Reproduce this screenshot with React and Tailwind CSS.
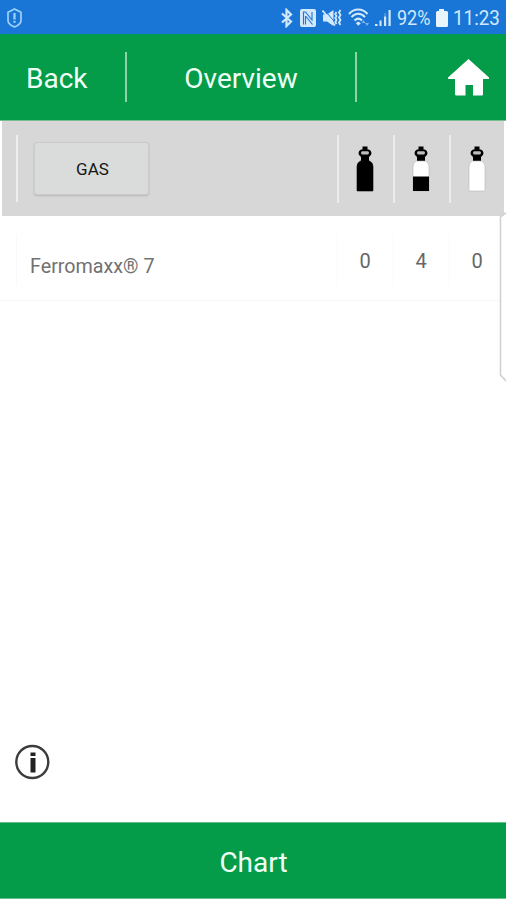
const rows = [{ name: 'Ferromaxx® 7', counts: [0, 4, 0] }];

const levels = ['full', 'half', 'empty'];

const StatusBar = () => (
  <div className="flex h-[34px] w-full items-center bg-[#1976d6] pl-[7px] pt-[1px] text-[20px] leading-none text-[#d3e8fb]">
    <svg className="h-5 w-4 shrink-0" viewBox="0 0 16 20" fill="none" stroke="#9fd2fa" strokeWidth="1.7">
      <path d="M7.500 1 14 4.300v8.200c0 2.800-3 5-6.500 6.500C4 17.500 1 15.300 1 12.500V4.300Z" strokeLinejoin="round" />
      <path d="M7.500 5v6.500M7.500 12.800v2" strokeWidth="2.200" />
    </svg>
    <svg className="ml-[258px] h-5 w-3 shrink-0" viewBox="0 0 12 20" fill="none" stroke="currentColor" strokeWidth="2.200">
      <path d="m1 5.500 9 8-4.500 4.500V2L10 6.500l-9 8" />
    </svg>
    <svg className="ml-[7px] h-5 w-4 shrink-0" viewBox="0 0 16 20">
      <path d="M2 1h12a2 2 0 0 1 2 2v14a2 2 0 0 1-2 2H2a2 2 0 0 1-2-2V3a2 2 0 0 1 2-2Z" fill="currentColor" />
      <path d="M3.500 16.500V4h2l6.500 8V4M5.500 8v8.500M6 8.500l6.500 8" fill="none" stroke="#1976d6" strokeWidth="1.100" />
    </svg>
    <svg className="ml-[6px] h-5 w-5 shrink-0" viewBox="0 0 20 20" fill="none" stroke="currentColor">
      <path d="M1 6.500h4L11.500 2v16L5 13.500H1Z" fill="currentColor" stroke="none" />
      <path d="m2.500 2 12 14" stroke="#1976d6" strokeWidth="1" />
      <path d="m.500 2.500 12.500 15" strokeWidth="1.800" />
      <path d="m14.500 4-1.200 2 1.200 2-1.200 2 1.200 2-1.200 2 1.200 2M18.500 2 17 4.500 18.500 7 17 9.500l1.500 2.500-1.500 2.500 1.500 2.500" strokeWidth="1.800" />
    </svg>
    <svg className="ml-[6px] h-5 w-[22px] shrink-0" viewBox="0 0 22 20" fill="none" stroke="currentColor" strokeWidth="2">
      <path d="M1 6C6 0 14.500 0 19.500 6M3.500 9.200c4-4.500 9.500-4.500 13.500 0M6.500 12.500c2.500-2.500 5-2.500 7.500 0" />
      <path d="m7.800 15.200 2.500-1.700 2.500 1.700-2.500 2.500Z" fill="currentColor" stroke="none" />
      <path d="m13.500 15 2-3 2 3ZM17 15l2 3 2-3Z" fill="#7db3e9" stroke="none" />
    </svg>
    <svg className="ml-[5px] h-5 w-[17px] shrink-0" viewBox="0 0 17 20" fill="currentColor">
      <path d="M0 16h2.500v2H0ZM4.500 12.500h2V18h-2ZM9 8.500h2.200V18H9ZM13.500 2h2.200v16h-2.200Z" />
      <path d="M9 5h2.200v3.500H9Z" opacity=".25" />
    </svg>
    <span className="ml-[5px] w-[38px] shrink-0">
      <span className="inline-block origin-left scale-x-[.9]">92%</span>
    </span>
    <svg className="h-5 w-[14px] shrink-0" viewBox="0 0 14 20" fill="#e9f5fd">
      <path d="M4 1h5v2h2.500a1.500 1.500 0 0 1 1.500 1.500v13a1.500 1.500 0 0 1-1.500 1.500h-9A1.500 1.500 0 0 1 1 17.500v-13A1.500 1.500 0 0 1 2.500 3H4Z" />
    </svg>
    <span className="ml-[4px] w-[48px] shrink-0">
      <span className="inline-block origin-left scale-x-[.94]">11:23</span>
    </span>
  </div>
);

const Header = () => (
  <header className="flex h-[87px] items-center border-b border-[#78bd91] bg-[#049b49] text-[28px] text-[#f0fff6]">
    <button type="button" className="w-[125px] pl-[26px] pt-[3px] text-left">Back</button>
    <span className="h-[50px] w-[2px] bg-[#8ed3aa]" />
    <h1 className="w-[228px] pt-[3px] text-center">Overview</h1>
    <span className="h-[50px] w-[2px] bg-[#8ed3aa]" />
    <button type="button" aria-label="Home" className="ml-auto mr-4">
      <svg className="h-[38px] w-[43px]" viewBox="0 0 43 38" fill="white">
        <path d="M21.500 1 42 19.500q.500 1.500-1 1.500h-5v15.500q0 1-1 1h-9V27h-7.500v10.500H9.500q-1.500 0-1.500-1.500V21H2q-1.500 0-1-1.500Z" />
      </svg>
    </button>
  </header>
);

const Cylinder = ({ level }) => (
  <svg className="h-[46px] w-[18px]" viewBox="0 0 18 46">
    <path d="M6.500.500h5v3h1.500q2.500 1 2.500 3.800 0 2.200-2.500 3.700v4H5v-4Q2.500 9.500 2.500 7.300 2.500 4.500 5 3.500h1.500Z" fill="black" />
    <path d="M6 5.200h6q2 1.600 0 3.200H6q-2-1.600 0-3.200Z" fill="#bdbdbd" />
    <path
      d="M1 20.500q0-4 3.500-5.500h9q3.500 1.500 3.500 5.500v24q0 .500-.500.500h-15q-.500 0-.500-.500Z"
      fill={level === 'full' ? 'black' : 'white'}
      stroke={level === 'full' ? 'black' : '#b5b5b5'}
      strokeWidth=".6"
    />
    {level === 'half' && <path d="M1 30.500h16V45H1Z" fill="black" />}
  </svg>
);

const TableHead = () => (
  <div className="mx-[2px] flex h-[95px] items-center bg-[#d7d7d7] pl-[14px]">
    <span className="h-[67px] w-[2px] bg-[#efefef]" />
    <button type="button" className="ml-4 mr-auto h-[53px] w-[115px] rounded-[3px] border border-[#cacccb] bg-[#d9dcdb] pl-[2px] pt-[2px] text-[17px] text-[#151515] shadow-[0_1px_2px_rgba(0,0,0,0.15)]">
      GAS
    </button>
    {levels.map((level) => (
      <div key={level} className="-mr-px ml-px flex h-[68px] w-14 items-center justify-center border-l-2 border-[#ececec] pr-[2px]">
        <Cylinder level={level} />
      </div>
    ))}
  </div>
);

const TableRow = ({ name, counts }) => (
  <div className="flex h-[85px] items-start border-b border-[#f7f7f7] pl-4 pr-px pt-[18px] text-[20px] text-[#717171]">
    <div className="mr-auto flex h-[52px] items-center border-l border-[#f9f9f9] pl-[13px] pt-[12px]">
      <span className="origin-left scale-x-[.985]">{name}</span>
    </div>
    {counts.map((count, i) => (
      <div key={i} className="flex h-[52px] w-14 items-center justify-center border-l border-[#fafafa] pr-px pt-[2px] text-[#666]">
        {count}
      </div>
    ))}
  </div>
);

const App = () => (
  <div className="relative flex h-[900px] w-[506px] flex-col overflow-hidden bg-white font-[Roboto,sans-serif]">
    <StatusBar />
    <Header />
    <main className="flex flex-1 flex-col">
      <TableHead />
      {rows.map((row) => (
        <TableRow key={row.name} {...row} />
      ))}
      <button type="button" aria-label="Info" className="mb-[42px] ml-[14px] mt-auto self-start">
        <svg className="h-9 w-9" viewBox="0 0 36 36">
          <circle cx="18.300" cy="18" r="16" fill="none" stroke="#3c3c3c" strokeWidth="2.400" />
          <path d="M16.500 8.500h5V12h-5ZM16.500 14h5v14.500h-5Z" fill="#222" />
        </svg>
      </button>
    </main>
    <button type="button" className="mb-px h-[77px] w-full border-y border-[#62c08b] bg-[#049b49] pl-px pt-[4px] text-[28px] text-[#f0fff6]">
      Chart
    </button>
    {/* edge panel handle, mostly off screen */}
    <svg className="absolute right-0 top-[211px] h-[172px] w-[7px]" viewBox="0 0 7 172" fill="white" stroke="#cfcfcf" strokeWidth="1.500">
      <path d="M8 1 1.500 6v158L8 171" />
    </svg>
  </div>
);

export default App;
